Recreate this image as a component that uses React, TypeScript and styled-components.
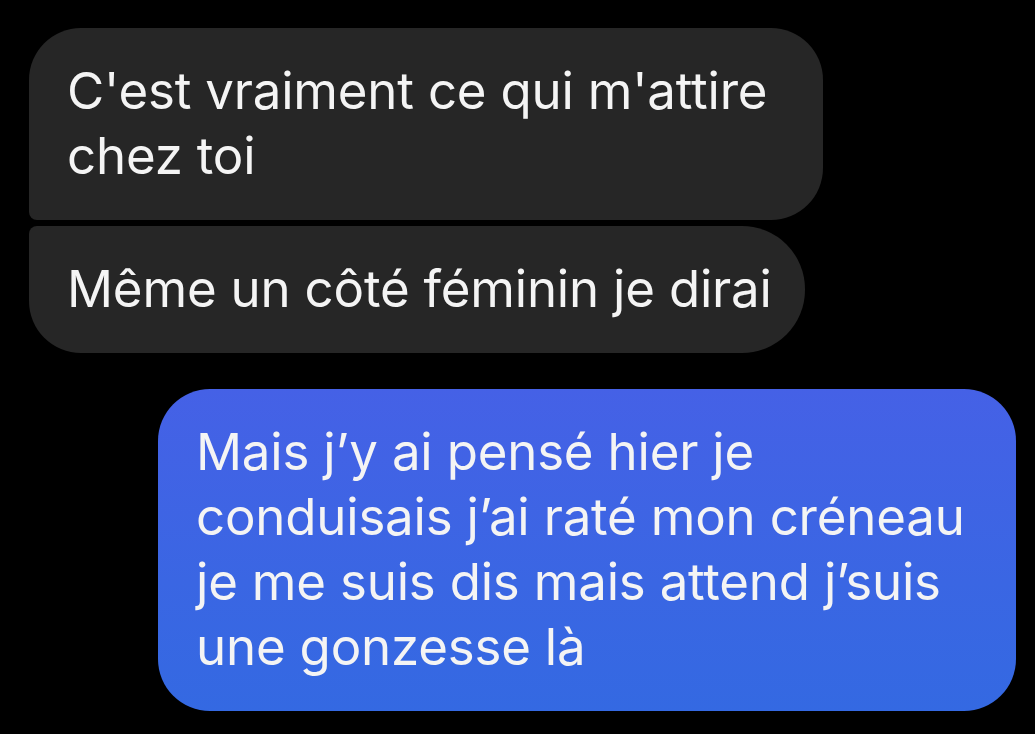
import React from "react";
import styled, { createGlobalStyle } from "styled-components";

const Global = createGlobalStyle`
  html, body { margin: 0; padding: 0; background: #000; }
  body { width: 1035px; height: 734px; overflow: hidden; }
`;

const Thread = styled.div`
  display: flex;
  flex-direction: column;
  padding: 28px 19px 0 29px;
  font-family: Inter, "Noto Sans", sans-serif;
`;

const Group = styled.div<{ $align: "start" | "end"; $gap: number; $mt?: number }>`
  display: flex;
  flex-direction: column;
  align-items: ${(p) => (p.$align === "end" ? "flex-end" : "flex-start")};
  gap: ${(p) => p.$gap}px;
  margin-top: ${(p) => p.$mt ?? 0}px;
`;

const Bubble = styled.div<{ $kind: "in" | "out"; $w: number; $radius: string }>`
  box-sizing: border-box;
  width: ${(p) => p.$w}px;
  padding: 30px 20px 32px 38px;
  border-radius: ${(p) => p.$radius};
  background: ${(p) =>
    p.$kind === "out"
      ? "linear-gradient(180deg, #4561e6 0%, #3a66e3 60%, #3469e2 100%)"
      : "#262626"};
  color: #f4f4f4;
  font-size: 51px;
  line-height: 65px;
  letter-spacing: -0.2px;
  white-space: nowrap;
`;

const Line = styled.span`
  display: block;
`;

type Msg = { kind: "in" | "out"; w: number; radius: string; lines: string[] };

const incoming: Msg[] = [
  {
    kind: "in",
    w: 794,
    radius: "52px 52px 52px 8px",
    lines: ["C'est vraiment ce qui m'attire", "chez toi"],
  },
  {
    kind: "in",
    w: 776,
    radius: "8px 63px 63px 52px",
    lines: ["Même un côté féminin je dirai"],
  },
];

const outgoing: Msg = {
  kind: "out",
  w: 858,
  radius: "52px",
  lines: [
    "Mais j’y ai pensé hier je",
    "conduisais j’ai raté mon créneau",
    "je me suis dis mais attend j’suis",
    "une gonzesse là",
  ],
};

function MessageBubble({ m }: { m: Msg }) {
  return (
    <Bubble $kind={m.kind} $w={m.w} $radius={m.radius}>
      {m.lines.map((l, i) => (
        <Line key={i}>{l}</Line>
      ))}
    </Bubble>
  );
}

export default function App() {
  return (
    <>
      <Global />
      <Thread>
        <Group $align="start" $gap={6}>
          {incoming.map((m, i) => (
            <MessageBubble key={i} m={m} />
          ))}
        </Group>
        <Group $align="end" $gap={0} $mt={36}>
          <MessageBubble m={outgoing} />
        </Group>
      </Thread>
    </>
  );
}
